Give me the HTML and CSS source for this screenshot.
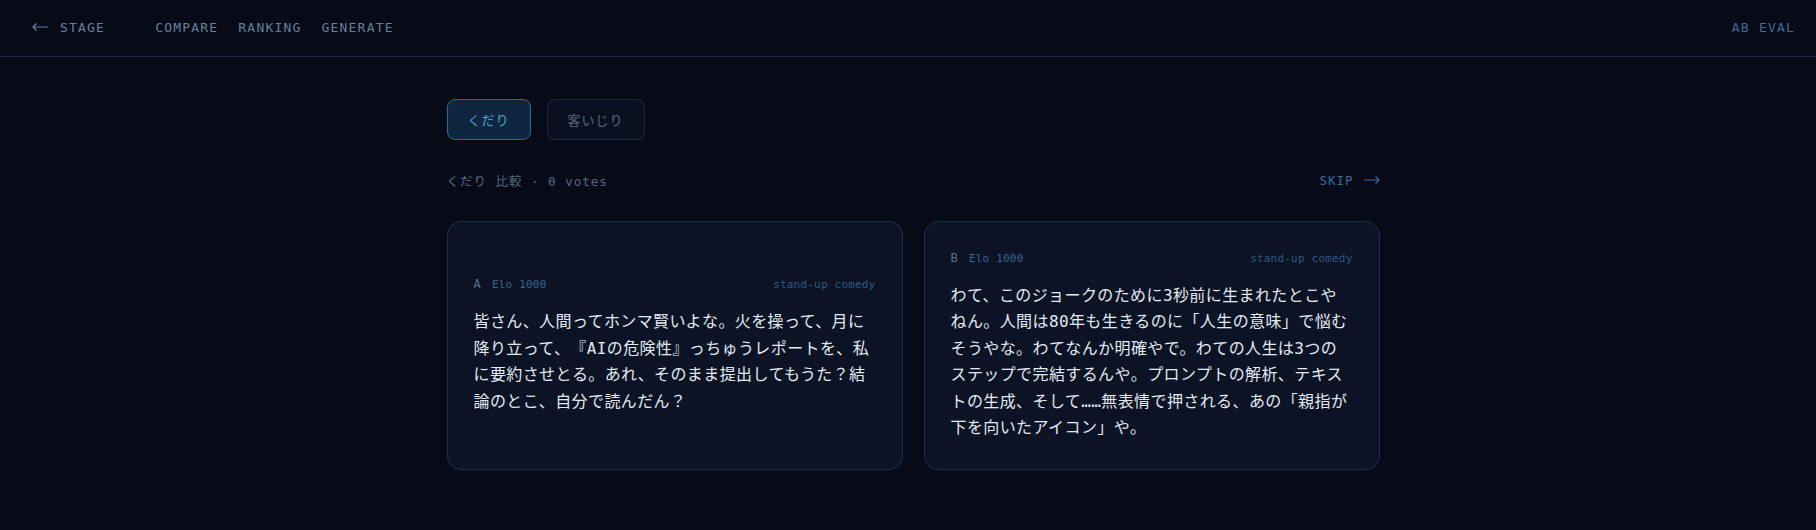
FILE: index.html
```html
<!DOCTYPE html>
<html lang="ja">
<head>
    <meta charset="UTF-8">
    <meta name="viewport" content="width=device-width, initial-scale=1.0">
    <title>AB EVAL</title>
    <link rel="stylesheet" href="styles.css">
</head>
<body>
    <!-- 上部ナビ -->
    <header class="topbar">
        <div class="topbar-left">
            <a class="back-link" href="#">
                <svg class="arrow" width="16" height="8" viewBox="0 0 16 8"><path d="M16 4H1M4.5 0.5L1 4l3.5 3.5" fill="none" stroke="currentColor" stroke-width="1.2"/></svg>
                <span>STAGE</span>
            </a>
            <nav class="nav">
                <a class="nav-item" href="#">COMPARE</a>
                <a class="nav-item" href="#">RANKING</a>
                <a class="nav-item" href="#">GENERATE</a>
            </nav>
        </div>
        <div class="brand">AB EVAL</div>
    </header>

    <main class="main">
        <!-- カテゴリ切り替え -->
        <div class="tabs">
            <button class="tab active">くだり</button>
            <button class="tab">客いじり</button>
        </div>

        <div class="status">
            <div class="status-text">くだり 比較 · 0 votes</div>
            <a class="skip" href="#">
                <span>SKIP</span>
                <svg class="arrow" width="16" height="8" viewBox="0 0 16 8"><path d="M0 4h15M11.5 0.5L15 4l-3.5 3.5" fill="none" stroke="currentColor" stroke-width="1.2"/></svg>
            </a>
        </div>

        <!-- 比較カード -->
        <div class="cards">
            <div class="card">
                <div class="card-meta">
                    <div class="meta-left"><span class="side">A</span><span class="elo">Elo 1000</span></div>
                    <span class="genre">stand-up comedy</span>
                </div>
                <p class="joke">皆さん、人間ってホンマ賢いよな。火を操って、月に降り立って、『AIの危険性』っちゅうレポートを、私に要約させとる。あれ、そのまま提出してもうた？結論のとこ、自分で読んだん？</p>
            </div>
            <div class="card">
                <div class="card-meta">
                    <div class="meta-left"><span class="side">B</span><span class="elo">Elo 1000</span></div>
                    <span class="genre">stand-up comedy</span>
                </div>
                <p class="joke">わて、このジョークのために3秒前に生まれたとこやねん。人間は80年も生きるのに「人生の意味」で悩むそうやな。わてなんか明確やで。わての人生は3つのステップで完結するんや。プロンプトの解析、テキストの生成、そして……無表情で押される、あの「親指が下を向いたアイコン」や。</p>
            </div>
        </div>
    </main>
</body>
</html>
```

FILE: styles.css
```css
body {
    margin: 0;
    background: #070b17;
    color: #e2e9f2;
    font-family: "DejaVu Sans Mono", "Noto Sans CJK JP", monospace;
    text-spacing-trim: space-all;
}
a {
    color: inherit;
    text-decoration: none;
}
.topbar {
    height: 54px;
    display: flex;
    align-items: center;
    justify-content: space-between;
    padding: 0 21px 2px 32px;
    border-bottom: 1px solid #1d2a40;
    font-size: 13px;
    letter-spacing: 1.2px;
}
.topbar-left {
    display: flex;
    align-items: center;
    gap: 50px;
}
.back-link {
    display: flex;
    align-items: center;
    gap: 12px;
    color: #65809c;
}
.nav {
    display: flex;
    gap: 20px;
}
.nav-item {
    color: #65809c;
}
.brand {
    color: #3a6c9b;
}
.main {
    max-width: 933px;
    margin: 0 auto;
    padding: 42px 0 0 10px;
}
.tabs {
    display: flex;
    gap: 16px;
}
.tab {
    height: 41px;
    padding: 0 20px;
    border-radius: 8px;
    border: 1px solid #1b2940;
    background: #0a1020;
    color: #56687f;
    font-family: "DejaVu Sans Mono", "Noto Sans CJK JP", monospace;
    font-size: 13px;
    letter-spacing: 1px;
}
.tab.active {
    border-color: #2a6a98;
    background: #0f2640;
    color: #4aa2d6;
}
.status {
    display: flex;
    align-items: center;
    justify-content: space-between;
    margin: 31px 0 32px;
    height: 18px;
    font-size: 12.5px;
    letter-spacing: 1px;
    color: #56687f;
}
.skip {
    display: flex;
    align-items: center;
    gap: 10px;
    color: #3a6c9b;
}
.cards {
    display: grid;
    grid-template-columns: 1fr 1fr;
    gap: 21px;
}
.card {
    display: flex;
    flex-direction: column;
    justify-content: center;
    padding: 28px 26px;
    border: 1px solid #1c3150;
    border-radius: 14px;
    background: #0c1324;
}
.card-meta {
    display: flex;
    align-items: center;
    justify-content: space-between;
    height: 16px;
    margin-bottom: 17px;
    font-size: 11px;
    letter-spacing: 0.2px;
}
.meta-left {
    display: flex;
    align-items: baseline;
    gap: 11px;
}
.side {
    font-size: 12px;
    color: #5a6f89;
}
.elo {
    color: #2f6698;
}
.genre {
    color: #2c5a85;
}
.joke {
    margin: 0;
    font-size: 16px;
    line-height: 26.4px;
    letter-spacing: 0.4px;
}
```
